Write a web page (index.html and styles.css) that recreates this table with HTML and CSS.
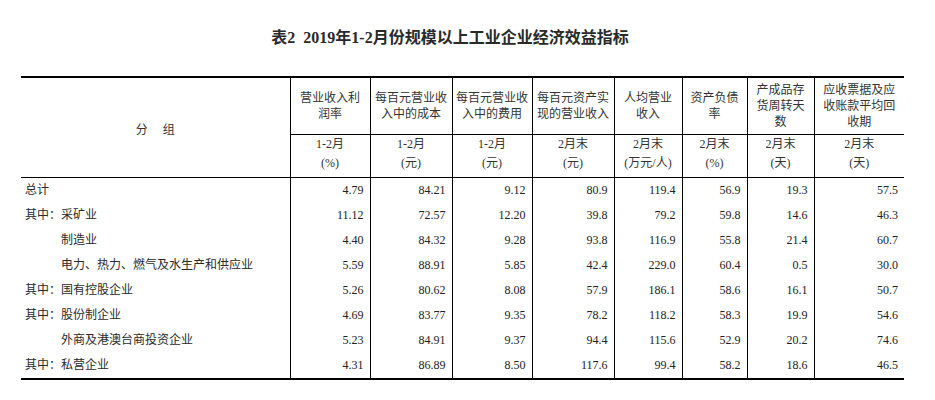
FILE: index.html
```html
<!DOCTYPE html>
<html lang="zh-CN">
<head>
<meta charset="utf-8">
<title>表2 2019年1-2月份规模以上工业企业经济效益指标</title>
<link rel="stylesheet" href="styles.css">
</head>
<body>
<div class="page">
  <h1 class="title">表2&nbsp;&nbsp;2019年1-2月份规模以上工业企业经济效益指标</h1>
  <table class="stats">
    <colgroup>
      <col class="c-name">
      <col class="c-80">
      <col class="c-82">
      <col class="c-80">
      <col class="c-82">
      <col class="c-68">
      <col class="c-65">
      <col class="c-67">
      <col class="c-90">
    </colgroup>
    <thead>
      <tr class="h1">
        <th rowspan="2" class="group"><span class="g1">分</span>组</th>
        <th>营业收入利<br>润率</th>
        <th>每百元营业收<br>入中的成本</th>
        <th>每百元营业收<br>入中的费用</th>
        <th>每百元资产实<br>现的营业收入</th>
        <th>人均营业<br>收入</th>
        <th>资产负债<br>率</th>
        <th>产成品存<br>货周转天<br>数</th>
        <th>应收票据及应<br>收账款平均回<br>收期</th>
      </tr>
      <tr class="h2">
        <th>1-2月<br>(%)</th>
        <th>1-2月<br>(元)</th>
        <th>1-2月<br>(元)</th>
        <th>2月末<br>(元)</th>
        <th>2月末<br>(万元/人)</th>
        <th>2月末<br>(%)</th>
        <th>2月末<br>(天)</th>
        <th>2月末<br>(天)</th>
      </tr>
    </thead>
    <tbody>
      <tr><td class="name">总计</td><td>4.79</td><td>84.21</td><td>9.12</td><td>80.9</td><td>119.4</td><td>56.9</td><td>19.3</td><td>57.5</td></tr>
      <tr><td class="name">其中：采矿业</td><td>11.12</td><td>72.57</td><td>12.20</td><td>39.8</td><td>79.2</td><td>59.8</td><td>14.6</td><td>46.3</td></tr>
      <tr><td class="name sub">制造业</td><td>4.40</td><td>84.32</td><td>9.28</td><td>93.8</td><td>116.9</td><td>55.8</td><td>21.4</td><td>60.7</td></tr>
      <tr><td class="name sub">电力、热力、燃气及水生产和供应业</td><td>5.59</td><td>88.91</td><td>5.85</td><td>42.4</td><td>229.0</td><td>60.4</td><td>0.5</td><td>30.0</td></tr>
      <tr><td class="name">其中：国有控股企业</td><td>5.26</td><td>80.62</td><td>8.08</td><td>57.9</td><td>186.1</td><td>58.6</td><td>16.1</td><td>50.7</td></tr>
      <tr><td class="name">其中：股份制企业</td><td>4.69</td><td>83.77</td><td>9.35</td><td>78.2</td><td>118.2</td><td>58.3</td><td>19.9</td><td>54.6</td></tr>
      <tr><td class="name sub">外商及港澳台商投资企业</td><td>5.23</td><td>84.91</td><td>9.37</td><td>94.4</td><td>115.6</td><td>52.9</td><td>20.2</td><td>74.6</td></tr>
      <tr><td class="name">其中：私营企业</td><td>4.31</td><td>86.89</td><td>8.50</td><td>117.6</td><td>99.4</td><td>58.2</td><td>18.6</td><td>46.5</td></tr>
    </tbody>
  </table>
</div>
</body>
</html>
```

FILE: styles.css
```css
html, body {
  margin: 0;
  padding: 0;
  background: #ffffff;
}

.page {
  padding: 28px 31px 0 21px;
  font-family: "Liberation Serif", "Noto Sans CJK SC", serif;
  color: #222222;
}

.title {
  margin: 0 0 28px 0;
  padding-right: 25px;
  text-align: center;
  font-size: 16px;
  line-height: 20px;
  font-weight: 700;
  color: #2a2a2a;
}

.stats {
  width: 883px;
  table-layout: fixed;
  border-collapse: collapse;
  border-top: 2px solid #000000;
  border-bottom: 2px solid #000000;
  font-size: 12px;
}

.c-name { width: 269px; }
.c-80 { width: 80px; }
.c-82 { width: 82px; }
.c-68 { width: 68px; }
.c-65 { width: 65px; }
.c-67 { width: 67px; }
.c-90 { width: 90px; }

.stats th,
.stats td {
  padding: 0;
  border-left: 1px solid #000000;
  border-right: 1px solid #000000;
}

.stats th:first-child,
.stats td:first-child {
  border-left: none;
}

.stats tr > :last-child {
  border-right: none;
}

.stats th {
  font-weight: 400;
  text-align: center;
  color: #333333;
}

.h1 th {
  height: 56px;
  line-height: 16px;
  vertical-align: middle;
  border-bottom: 1px solid #000000;
}

.h1 th.group {
  border-bottom: 1px solid #000000;
  padding-top: 4px;
}

.group .g1 {
  margin-right: 15px;
}

.h2 th {
  height: 42px;
  line-height: 19px;
  vertical-align: top;
  padding-top: 0;
  border-bottom: 1px solid #000000;
}

.h2 th:first-child {
  border-left: 1px solid #000000;
}

.stats td {
  height: 25px;
  line-height: 25px;
  text-align: right;
  padding-right: 6px;
  white-space: nowrap;
}

.stats td.name {
  text-align: left;
  padding-left: 4px;
  padding-right: 0;
  color: #2a2a2a;
}

.stats td.name.sub {
  padding-left: 40px;
}
```
